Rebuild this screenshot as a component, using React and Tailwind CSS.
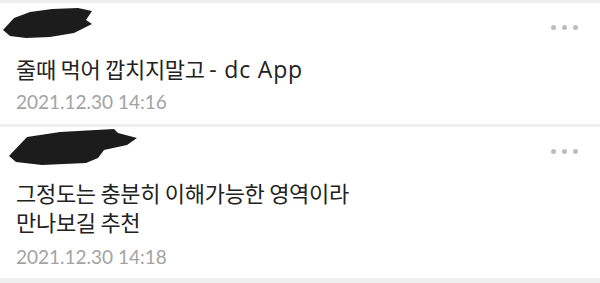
import React from 'react';

const COMMENTS = [
  {
    id: 1,
    lines: [
      <>
        줄때 먹어 깝치지말고{' '}
        <span className="font-['Open_Sans',sans-serif] text-[23px] tracking-[0.8px]">- dc App</span>
      </>,
    ],
    date: '2021.12.30 14:16',
    scribble: 'M3 30 L14 18 L30 12 L52 9 L78 8 L92 11 L86 20 L92 24 L74 33 L50 37 L26 38 L10 36 Z',
    h: 'h-[121px]',
    dateGap: 'mt-[6px]',
  },
  {
    id: 2,
    lines: ['그정도는 충분히 이해가능한 영역이라', '만나보길 추천'],
    date: '2021.12.30 14:18',
    scribble: 'M9 156 L27 137 L60 132 L114 129 L118 133 L137 138 L127 145 L104 150 L98 158 L86 163 L42 165 L16 162 Z',
    h: 'h-[151px]',
    dateGap: 'mt-[9px]',
  },
];

const Dots = () => (
  <div className="flex gap-[6px]">
    <span className="w-[5px] h-[5px] rounded-full bg-[#bdbdbd]" />
    <span className="w-[5px] h-[5px] rounded-full bg-[#bdbdbd]" />
    <span className="w-[5px] h-[5px] rounded-full bg-[#bdbdbd]" />
  </div>
);

const Comment = ({ c, top }) => (
  <div className={`relative bg-white ${c.h} pl-4 pr-[22px] flex flex-col`}>
    {/* redacted nickname */}
    <svg className="absolute left-0 top-0" width="150" height="50" viewBox={`0 ${top} 150 50`}>
      <path d={c.scribble} fill="#1c1c1c" />
    </svg>
    <div className="flex justify-end pt-[22px] h-[51px]">
      <Dots />
    </div>
    <div className="font-['Noto_Sans_CJK_KR',sans-serif] text-[22px] leading-[29px] text-[#222] tracking-[-0.3px]">
      {c.lines.map((l, i) => (
        <div key={i}>{l}</div>
      ))}
    </div>
    <div className={`text-[19px] leading-[24px] text-[#a3a3a3] ${c.dateGap}`}>{c.date}</div>
  </div>
);

export default function App() {
  return (
    <div
      className="w-[600px] h-[283px] bg-[#efefef] pt-[3px] flex flex-col gap-[3px] overflow-hidden"
      style={{ fontFamily: "Lato, 'Noto Sans CJK KR', sans-serif" }}
    >
      <Comment c={COMMENTS[0]} top={3} />
      <Comment c={COMMENTS[1]} top={127} />
    </div>
  );
}
